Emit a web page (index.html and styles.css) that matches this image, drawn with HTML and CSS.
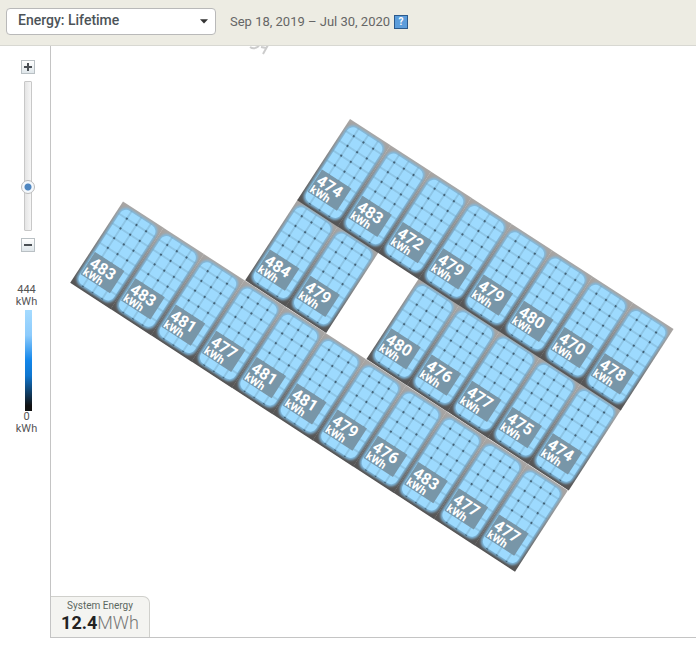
FILE: index.html
```html
<!DOCTYPE html>
<html lang="en">
<head>
<meta charset="utf-8">
<title>Energy: Lifetime</title>
<link rel="stylesheet" href="styles.css">
</head>
<body>
<header class="toolbar">
  <div class="picker">
    <select class="picker-select" aria-label="View">
      <option>Energy: Lifetime</option>
    </select>
    <svg class="picker-arrow" width="8" height="5" viewBox="0 0 8 5" aria-hidden="true"><path d="M0 0.3h8L4 4.6z" fill="#333"/></svg>
  </div>
  <span class="date-range">Sep 18, 2019 – Jul 30, 2020</span>
  <button class="help" type="button" aria-label="Help">?</button>
</header>
<main class="workspace">
  <aside class="sidebar">
    <button class="zoom-button" type="button" aria-label="Zoom in"><svg width="8" height="8" viewBox="0 0 8 8"><path d="M3 0h2v3h3v2H5v3H3V5H0V3h3z" fill="#4a4f54"/></svg></button>
    <input class="zoom-slider" type="range" min="0" max="100" value="27" aria-label="Zoom level">
    <button class="zoom-button" type="button" aria-label="Zoom out"><svg width="8" height="8" viewBox="0 0 8 8"><path d="M0 3h8v2H0z" fill="#4a4f54"/></svg></button>
    <div class="legend">
      <div>444<br>kWh</div>
      <div class="legend-bar"></div>
      <div>0<br>kWh</div>
    </div>
  </aside>
  <section class="canvas">
    <svg class="array" role="img" aria-label="Solar array">
      <defs>
        <linearGradient id="frame" x1="0" y1="0" x2="0" y2="1">
          <stop offset="0" stop-color="#a9a6a4"/>
          <stop offset="0.45" stop-color="#858382"/>
          <stop offset="1" stop-color="#545353"/>
        </linearGradient>
        <filter id="soft" x="-10%" y="-10%" width="120%" height="120%"><feGaussianBlur stdDeviation="0.9"/></filter>
        <pattern id="cells" width="11.5" height="11.6" patternUnits="userSpaceOnUse" x="6.8" y="6.6">
          <path d="M5.75 0v11.6M0 5.8h11.5" stroke="#6f9ebb" stroke-width="0.7" fill="none"/>
          <circle cx="5.75" cy="5.8" r="1.1" fill="#3c5b70"/>
        </pattern>
        <g id="panel">
          <rect width="48.4" height="97" fill="url(#frame)"/>
          <rect x="2.2" y="2.5" width="44" height="91.5" rx="8" fill="#7fbbe2" filter="url(#soft)"/>
          <rect x="3.8" y="4.2" width="40.8" height="88" rx="7" fill="#9ddafe"/>
          <rect x="2.6" y="3" width="43.2" height="90.5" rx="7" fill="url(#cells)"/>
          <rect x="4" y="57.5" width="35" height="26.5" fill="#7896a8"/>
        </g>
      </defs>
      <path class="stray" d="M199 1q4 3 9-1M212 8l5-9M210 1l5 1"/>
      <g transform="translate(72 155.5) rotate(33)">
        <g transform="translate(0 0)"><use href="#panel"/><text class="value" x="6" y="73">483</text><text class="unit" x="5" y="83">kWh</text></g>
        <g transform="translate(48.2 0)"><use href="#panel"/><text class="value" x="6" y="73">483</text><text class="unit" x="5" y="83">kWh</text></g>
        <g transform="translate(96.4 0)"><use href="#panel"/><text class="value" x="6" y="73">481</text><text class="unit" x="5" y="83">kWh</text></g>
        <g transform="translate(144.6 0)"><use href="#panel"/><text class="value" x="6" y="73">477</text><text class="unit" x="5" y="83">kWh</text></g>
        <g transform="translate(192.8 0)"><use href="#panel"/><text class="value" x="6" y="73">481</text><text class="unit" x="5" y="83">kWh</text></g>
        <g transform="translate(241 0)"><use href="#panel"/><text class="value" x="6" y="73">481</text><text class="unit" x="5" y="83">kWh</text></g>
        <g transform="translate(289.2 0)"><use href="#panel"/><text class="value" x="6" y="73">479</text><text class="unit" x="5" y="83">kWh</text></g>
        <g transform="translate(337.4 0)"><use href="#panel"/><text class="value" x="6" y="73">476</text><text class="unit" x="5" y="83">kWh</text></g>
        <g transform="translate(385.6 0)"><use href="#panel"/><text class="value" x="6" y="73">483</text><text class="unit" x="5" y="83">kWh</text></g>
        <g transform="translate(433.8 0)"><use href="#panel"/><text class="value" x="6" y="73">477</text><text class="unit" x="5" y="83">kWh</text></g>
        <g transform="translate(482 0)"><use href="#panel"/><text class="value" x="6" y="73">477</text><text class="unit" x="5" y="83">kWh</text></g>
      </g>
      <g transform="translate(247 153) rotate(33)">
        <g transform="translate(0 0)"><use href="#panel"/><text class="value" x="6" y="73">484</text><text class="unit" x="5" y="83">kWh</text></g>
        <g transform="translate(48.2 0)"><use href="#panel"/><text class="value" x="6" y="73">479</text><text class="unit" x="5" y="83">kWh</text></g>
        <g transform="translate(144.6 0)"><use href="#panel"/><text class="value" x="6" y="73">480</text><text class="unit" x="5" y="83">kWh</text></g>
        <g transform="translate(192.8 0)"><use href="#panel"/><text class="value" x="6" y="73">476</text><text class="unit" x="5" y="83">kWh</text></g>
        <g transform="translate(241 0)"><use href="#panel"/><text class="value" x="6" y="73">477</text><text class="unit" x="5" y="83">kWh</text></g>
        <g transform="translate(289.2 0)"><use href="#panel"/><text class="value" x="6" y="73">475</text><text class="unit" x="5" y="83">kWh</text></g>
        <g transform="translate(337.4 0)"><use href="#panel"/><text class="value" x="6" y="73">474</text><text class="unit" x="5" y="83">kWh</text></g>
      </g>
      <g transform="translate(299 73) rotate(33)">
        <g transform="translate(0 0)"><use href="#panel"/><text class="value" x="6" y="73">474</text><text class="unit" x="5" y="83">kWh</text></g>
        <g transform="translate(48.2 0)"><use href="#panel"/><text class="value" x="6" y="73">483</text><text class="unit" x="5" y="83">kWh</text></g>
        <g transform="translate(96.4 0)"><use href="#panel"/><text class="value" x="6" y="73">472</text><text class="unit" x="5" y="83">kWh</text></g>
        <g transform="translate(144.6 0)"><use href="#panel"/><text class="value" x="6" y="73">479</text><text class="unit" x="5" y="83">kWh</text></g>
        <g transform="translate(192.8 0)"><use href="#panel"/><text class="value" x="6" y="73">479</text><text class="unit" x="5" y="83">kWh</text></g>
        <g transform="translate(241 0)"><use href="#panel"/><text class="value" x="6" y="73">480</text><text class="unit" x="5" y="83">kWh</text></g>
        <g transform="translate(289.2 0)"><use href="#panel"/><text class="value" x="6" y="73">470</text><text class="unit" x="5" y="83">kWh</text></g>
        <g transform="translate(337.4 0)"><use href="#panel"/><text class="value" x="6" y="73">478</text><text class="unit" x="5" y="83">kWh</text></g>
      </g>
    </svg>
    <div class="summary">
      <div class="summary-label">System Energy</div>
      <div class="summary-value"><strong>12.4</strong>MWh</div>
    </div>
  </section>
</main>
</body>
</html>
```
FILE: styles.css
```css
* { box-sizing: border-box; }

body {
  margin: 0;
  min-height: 100vh;
  display: flex;
  flex-direction: column;
  background: #fff;
  color: #444;
  font-family: Roboto, "Liberation Sans", sans-serif;
}

.toolbar {
  display: flex;
  align-items: center;
  height: 46px;
  padding: 0 6px 2px;
  background: #edece3;
  border-bottom: 1px solid #d8d8d2;
}

.picker {
  display: grid;
  align-items: center;
  width: 210px;
  margin-right: 14px;
}

.picker-select {
  grid-area: 1 / 1;
  appearance: none;
  width: 100%;
  height: 27px;
  padding: 0 24px 4px 11px;
  border: 1px solid #b9b9b9;
  border-radius: 4px;
  background: #fff;
  color: #4c5358;
  font: 500 14px/20px Roboto, "Liberation Sans", sans-serif;
}

.picker-arrow {
  grid-area: 1 / 1;
  justify-self: end;
  margin-right: 8px;
  pointer-events: none;
}

.date-range {
  color: #666;
  font-size: 13px;
  line-height: 16px;
}

.help {
  width: 14px;
  height: 14px;
  margin-left: 4px;
  padding: 0;
  border: 1px solid #2c5a8c;
  background: #5c9ddb;
  color: #fff;
  font: 700 10px/12px Roboto, "Liberation Sans", sans-serif;
}

.workspace {
  flex: 1;
  display: flex;
  padding-bottom: 13px;
}

.sidebar {
  flex: none;
  display: flex;
  flex-direction: column;
  align-items: center;
  width: 50px;
  padding: 14px 0 0 5px;
}

.zoom-button {
  display: grid;
  place-items: center;
  width: 14px;
  height: 14px;
  padding: 0;
  border: 1px solid #b9c0c4;
  background: linear-gradient(#fff, #dfe6ea);
}

.zoom-slider {
  appearance: none;
  writing-mode: vertical-lr;
  direction: rtl;
  width: 14px;
  height: 150px;
  margin: 7px 0;
  background: none;
}

.zoom-slider::-webkit-slider-runnable-track {
  width: 8px;
  height: 150px;
  border: 1px solid #c8c8c8;
  border-radius: 1px;
  background: linear-gradient(90deg, #e4e4e4, #f6f6f6);
}

.zoom-slider::-webkit-slider-thumb {
  appearance: none;
  width: 14px;
  height: 14px;
  margin-right: -4px;
  margin-left: -4px;
  border: 1px solid #bbb;
  border-radius: 50%;
  background: radial-gradient(circle, #4f86c0 0 3px, #f4f8fc 4px);
}

.legend {
  margin-top: 32px;
  padding-right: 2px;
  color: #555;
  font-size: 11px;
  line-height: 12px;
  text-align: center;
}

.legend-bar {
  width: 7px;
  height: 101px;
  margin: 2px 0 0 9px;
  background: linear-gradient(#a5dbff, #8ccbfc 25%, #1286ea 50%, #0f76cf 65%, #111 95%);
}

.canvas {
  flex: 1;
  display: grid;
  min-width: 0;
  border-left: 1px solid #c4c4c4;
  border-bottom: 1px solid #c4c4c4;
}

.array {
  grid-area: 1 / 1;
  width: 100%;
  height: 100%;
  min-height: 540px;
}

.value,
.unit {
  fill: #fff;
  font-weight: 700;
}

.value { font-size: 16px; }
.unit { font-size: 11px; }

.stray {
  fill: none;
  stroke: #ccc;
  stroke-width: 2;
}

.summary {
  grid-area: 1 / 1;
  place-self: end start;
  width: 99px;
  padding: 3px 0 3px;
  border: 1px solid #d0d0cc;
  border-width: 1px 1px 0 0;
  border-radius: 0 7px 0 0;
  background: #f4f4f1;
  text-align: center;
}

.summary-label {
  color: #5b675f;
  font-size: 10px;
  line-height: 12px;
}

.summary-value {
  color: #777;
  font-size: 18px;
  font-weight: 300;
  line-height: 22px;
}

.summary-value strong {
  color: #222;
  font-weight: 700;
}
```
